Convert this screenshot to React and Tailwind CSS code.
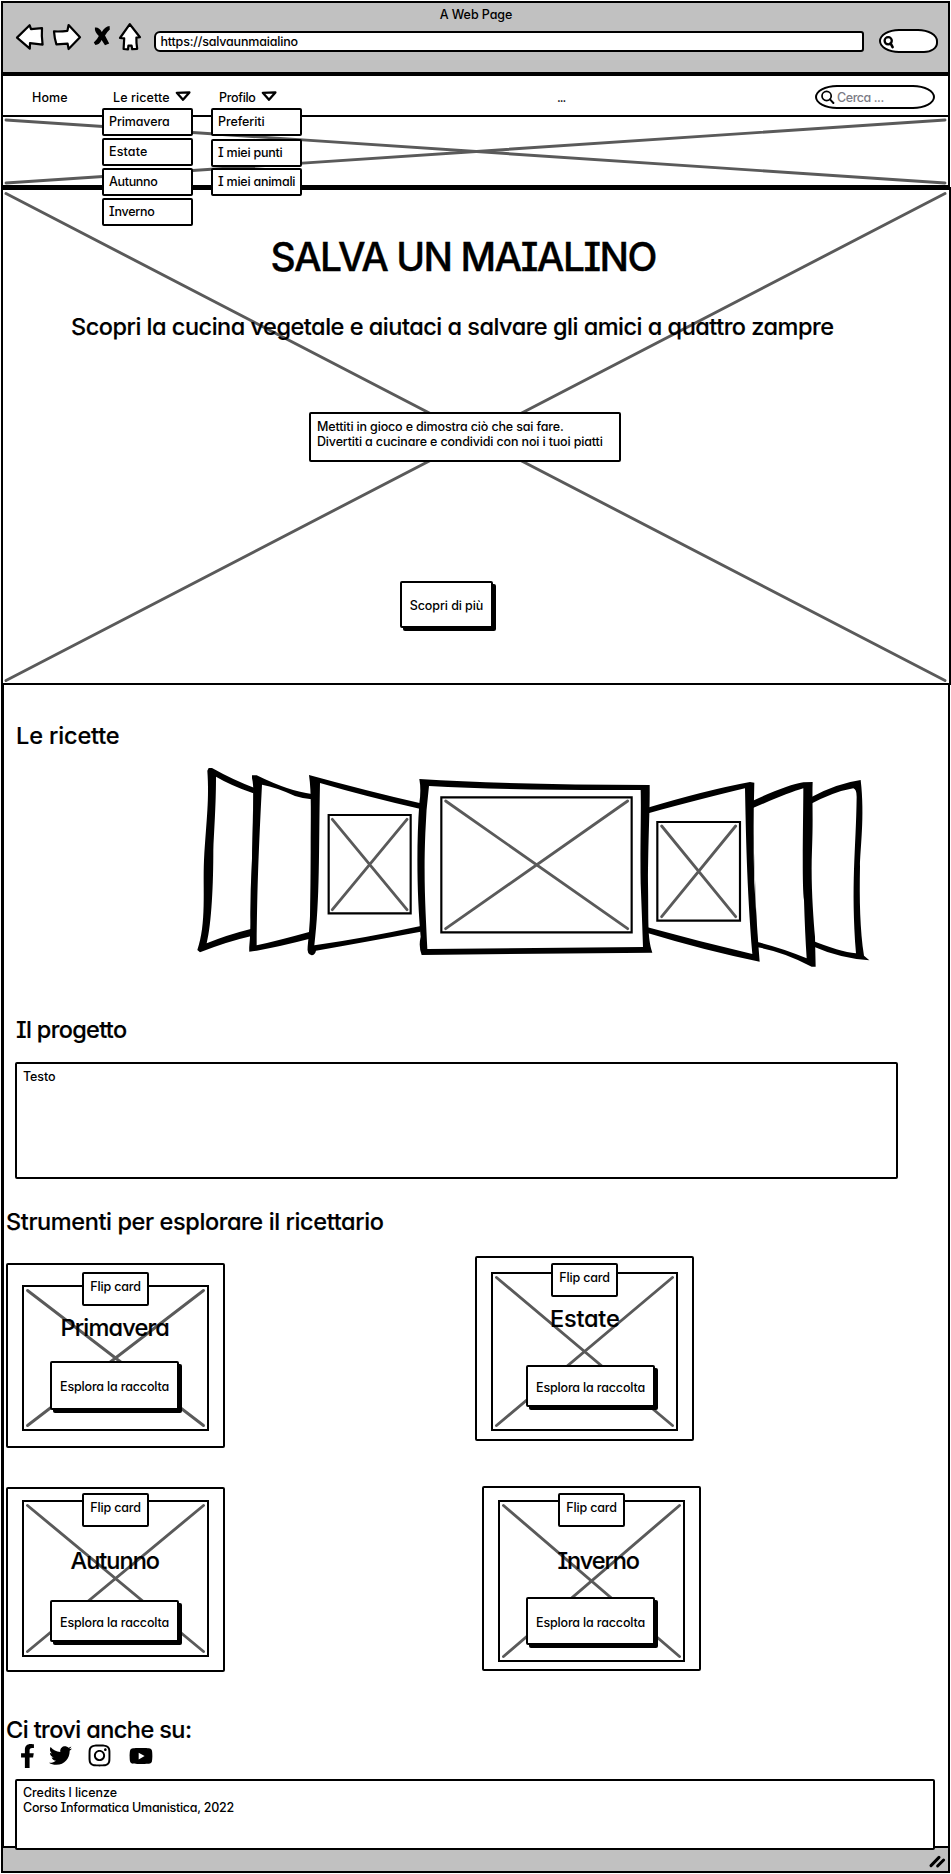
import { FaFacebookF, FaTwitter, FaInstagram, FaYoutube } from 'react-icons/fa'

const small = 'text-[12.5px] leading-[15px] whitespace-nowrap'
const large = 'text-[23.5px] leading-[28px] whitespace-nowrap [-webkit-text-stroke:0.15px_#000]'

function Cross({ w, h, x1, y1, x2, y2 }) {
  return (
    <svg className="absolute top-0 left-0 overflow-visible" width={w} height={h} viewBox={`0 0 ${w} ${h}`}>
      <path d={`M${x1} ${y1}L${x2} ${y2}M${x1} ${y2}L${x2} ${y1}`} stroke="#5a5a5a" strokeWidth="2.9" fill="none" strokeLinecap="round" />
    </svg>
  )
}

function BrowserIcons() {
  return (
    <svg width="130" height="30" viewBox="14 22 130 30" className="ml-[11px] shrink-0">
      <g fill="#fff" stroke="#000" strokeWidth="2.2" strokeLinejoin="round">
        <path d="M17 37.6L29.6 25.2L31 29.2L42 28.2Q41.4 36 42.6 44.6L30 43.2L29.8 48.6Z" />
        <path d="M54 31.4Q61 31.8 67.4 30.8L68.6 25L80 37.2L68.6 49L67.6 43.6L56.4 44.4Q54.4 38 54 31.4Z" />
        <path d="M129.8 24.2L140 37.2L136.4 37.6Q136.2 43 137.2 48.8L132.2 49.2L131.6 45.6L128.4 45.6L128 49.4L123.6 49L124.2 38.4L120 38Z" />
      </g>
      <path d="M94.9 27.6Q99 26.8 101.8 32Q105 26.6 109.6 26L109.8 29.4Q106.8 32 105 35.6L109.2 43.4L105 45.2L101.6 40Q99.4 44.8 95.4 45L93.8 42.4Q97.6 39 98.8 36Q94.4 32 94.9 27.6Z" />
    </svg>
  )
}

function Triangle() {
  return (
    <svg width="16" height="12" viewBox="0 0 16 12">
      <path d="M1.8 2.8L14.4 2.4L8 9.8Z" fill="#fff" stroke="#000" strokeWidth="2.3" strokeLinejoin="round" />
    </svg>
  )
}

function MenuItem({ children, className = '' }) {
  return (
    <div className={`h-7 w-[91px] rounded-[2px] border-2 border-black bg-white pt-1 pl-[5px] ${small} ${className}`}>{children}</div>
  )
}

function Carousel() {
  return (
    <svg width="690" height="210" viewBox="190 760 690 210" className="mt-[10.5px] ml-[186px] shrink-0">
      <g transform="translate(180 750) scale(.33333)">
        <path d="M86 54L96 54Q160 90 222 113L215 558Q140 575 60 607L52 600C80 520 68 420 72 330C80 200 88 150 82 62Z" />
        <path fill="#fff" d="M108 80Q150 105 220 130L212 537Q140 555 80 580C95 520 100 400 100 300C105 200 108 150 108 80Z" />
        <path d="M216 76L230 76Q330 125 395 132L395 565Q300 590 230 602L208 605C206 590 213 560 211 500C210 400 220 300 219 200C220 140 222 110 216 84Z" />
        <path fill="#fff" d="M246 104Q290 112 345 138Q370 146 395 148L390 545Q300 570 230 586C232 400 236 300 246 104Z" />
        <path d="M387 75Q550 120 722 160L722 545Q560 575 408 602Q405 615 395 616Q380 612 383 590C395 480 392 400 392 300C392 200 395 130 387 75Z" />
        <path fill="#fff" d="M420 99Q560 140 722 177L722 528Q550 565 403 586C420 450 416 300 420 99Z" />
        <g transform="translate(1020 0)">
          <path d="M870 143Q950 100 1022 90C1035 200 1020 300 1020 350C1018 450 1020 540 1032 617L1048 631Q960 625 876 588Z" />
          <path fill="#fff" d="M860 168Q940 125 1000 115Q1010 118 1010 140C1008 300 992 400 1008 610Q960 605 870 569Z" />
          <path d="M697 153Q800 105 850 97L878 96C876 150 880 200 876 300C872 400 880 500 885 560L887 650L875 650Q790 605 712 592Z" />
          <path fill="#fff" d="M697 175Q800 130 850 115C850 200 845 400 852 450Q855 550 860 625Q790 595 712 576Z" />
          <path d="M380 174Q560 120 690 96L703 98C700 200 700 300 703 400Q712 550 719 635Q550 600 380 548Z" />
          <path fill="#fff" d="M380 191Q550 145 675 115C678 250 680 400 697 612Q540 575 380 531Z" />
        </g>
        <path d="M718 87Q1000 105 1409 105C1410 180 1405 250 1404 400C1406 520 1402 560 1417 608L725 615Q715 590 722 560C712 450 708 300 718 160Q724 120 718 87Z" />
        <path fill="#fff" d="M747 108Q1000 122 1382 120C1384 180 1380 300 1382 400Q1386 500 1389 591L742 597C738 500 730 400 736 250Q738 180 747 108Z" />
        <g fill="#fff" stroke="#000" strokeWidth="6.5">
          <path d="M446 195H692V490H446Z" />
          <path d="M784 142H1355V547H784Z" />
          <path d="M1432 216H1680V512H1432Z" />
        </g>
        <path
          d="M457 208L681 479M457 479L681 208M797 153L1343 536M797 536L1343 153M1445 228L1667 500M1445 500L1667 228"
          stroke="#5a5a5a"
          strokeWidth="8.5"
          strokeLinecap="round"
        />
      </g>
    </svg>
  )
}

function SeasonCard({ title, className, pad, picH, flip, titlePos, button, label }) {
  return (
    <article className={`relative w-[219px] rounded-[2px] border-2 border-black bg-white ${className}`}>
      <div className={pad}>
        <div className={`relative w-[187px] border-2 border-black ${picH.box}`}>
          <Cross w={183} h={picH.h} x1={3.5} y1={3.5} x2={179.5} y2={picH.h - 3.5} />
        </div>
      </div>
      <h3 className={`absolute ${large} ${titlePos}`}>{title}</h3>
      <div className={`absolute h-[34px] w-[67px] rounded-[2px] border-2 border-black bg-white pt-[5px] text-center tracking-[-0.0133em] ${small} ${flip}`}>Flip card</div>
      <button className={`absolute flex w-[129px] items-center justify-center rounded-[2px] border-2 border-black bg-white tracking-[-0.0129em] shadow-[3px_3px_0_#000] ${small} ${button}`}>
        <span className={label}>Esplora la raccolta</span>
      </button>
    </article>
  )
}

export default function App() {
  return (
    <div className="flex h-[1874px] w-[951px] flex-col overflow-hidden bg-white font-['Inter',sans-serif] font-medium text-black [font-feature-settings:'cv11','cv08']">
      <header className="mt-px ml-px h-[73px] w-[949px] shrink-0 border-2 border-black bg-[#c1c1c1] pt-1">
        <p className={`pl-px text-center tracking-[-0.0061em] ${small}`}>A Web Page</p>
        <div className="flex items-start">
          <BrowserIcons />
          <div className={`mt-[9px] ml-[10px] h-[21px] w-[710px] rounded-l-[6px] rounded-r-[3px] border-2 border-black bg-white pt-[1px] pl-[4.5px] tracking-[-0.015em] ${small}`}>https://salvaunmaialino</div>
          <div className="mt-[7px] ml-[15px] h-6 w-[59px] rounded-[20px_20px_14px_20px/12px_12px_10px_12px] border-2 border-black bg-white">
            <svg width="14" height="14" viewBox="0 0 14 14" className="mt-[3.5px] ml-[1px]">
              <path d="M8.6 8.4L10.6 12.2" stroke="#000" strokeWidth="2.6" strokeLinecap="round" />
              <circle cx="6.2" cy="5.8" r="3.6" fill="none" stroke="#000" strokeWidth="2.3" />
            </svg>
          </div>
        </div>
      </header>

      <nav className={`relative z-20 ml-px flex h-[43px] w-[949px] shrink-0 items-start border-2 border-black bg-white pt-[14px] pl-[29px] ${small}`}>
        <a className="w-[81px] tracking-[0.01em]">Home</a>
        <div className="relative flex w-[106px] tracking-[0.006em]">
          Le ricette
          <span className="ml-[5.5px]"><Triangle /></span>
          <div className="absolute top-[18px] -left-[11px] flex flex-col gap-[2px]">
            <MenuItem className="tracking-[-0.0099em]">Primavera</MenuItem>
            <MenuItem className="tracking-[0.0119em]">Estate</MenuItem>
            <MenuItem className="tracking-[-0.0257em]">Autunno</MenuItem>
            <MenuItem className="tracking-[-0.0211em]">Inverno</MenuItem>
          </div>
        </div>
        <div className="relative flex w-[338px] tracking-[-0.0262em]">
          Profilo
          <span className="ml-[5px]"><Triangle /></span>
          <div className="absolute top-[18px] -left-[8px] flex flex-col gap-[2px]">
            <MenuItem className="tracking-[-0.006em]">Preferiti</MenuItem>
            <MenuItem className="mt-px -mb-px tracking-[-0.018em]">I miei punti</MenuItem>
            <MenuItem className="tracking-[-0.019em]">I miei animali</MenuItem>
          </div>
        </div>
        <span className="w-[258px] tracking-[-0.08em]">...</span>
        <div className="-mt-[5px] flex h-6 w-[120px] items-start rounded-[22px/12px] border-2 border-black pt-[2.5px] pl-[4px] text-[#7c7c86]">
          <svg width="14" height="14" viewBox="0 0 14 14">
            <circle cx="5.6" cy="6" r="4.6" fill="none" stroke="#000" strokeWidth="1.7" />
            <path d="M9 9.4L12.4 13" stroke="#000" strokeWidth="2" strokeLinecap="round" />
          </svg>
          <span className="ml-[2px] tracking-[-0.035em]">Cerca ...</span>
        </div>
      </nav>

      <div className="relative ml-px h-[70px] w-[949px] shrink-0 border-x-2 border-b-2 border-black">
        <Cross w={945} h={68} x1={3} y1={3} x2={942} y2={66} />
      </div>

      <section className="relative ml-px h-[498px] w-[950px] shrink-0 border-2 border-t-[3px] border-black">
        <Cross w={946} h={493} x1={3} y1={3.5} x2={942} y2={490.5} />
        <div className="relative flex flex-col items-start">
          <h1 className="mt-[43px] ml-[267.5px] text-[39px] leading-[48px] tracking-[-0.0389em] whitespace-nowrap [-webkit-text-stroke:0.35px_#000]">SALVA UN MAIALINO</h1>
          <p className={`mt-[31.5px] ml-[68px] tracking-[-0.0208em] ${large}`}>Scopri la cucina vegetale e aiutaci a salvare gli amici a quattro zampre</p>
          <div className={`mt-[71.5px] ml-[306px] h-[50px] w-[312px] rounded-[2px] border-2 border-black bg-white pt-[5px] pl-[6px] ${small}`}>
            <p className="tracking-[-0.0125em]">Mettiti in gioco e dimostra ciò che sai fare.</p>
            <p className="tracking-[-0.0125em]">Divertiti a cucinare e condividi con noi i tuoi piatti</p>
          </div>
          <button className={`mt-[119px] ml-[397px] h-[47px] w-[93px] rounded-[2px] border-2 border-black bg-white pt-px tracking-[-0.0071em] shadow-[3px_3px_0_#000] ${small}`}>Scopri di più</button>
        </div>
      </section>

      <main className="relative z-10 ml-px flex h-[1161px] w-[949px] shrink-0 flex-col items-start border-r-2 border-l-[3px] border-black pt-[36.5px]">
        <h2 className={`ml-[12px] tracking-[-0.006em] ${large}`}>Le ricette</h2>
        <Carousel />

        <h2 className={`mt-[45.5px] ml-[12px] tracking-[-0.0285em] ${large}`}>Il progetto</h2>
        <div className={`mt-[18.5px] ml-[11px] h-[117px] w-[883px] shrink-0 rounded-[2px] border-2 border-black pt-[5px] pl-[6px] tracking-[-0.0072em] ${small}`}>Testo</div>

        <h2 className={`mt-[29px] ml-[2px] tracking-[-0.0167em] ${large}`}>Strumenti per esplorare il ricettario</h2>
        <div className="mt-[20px] ml-[2px] flex w-[695px] shrink-0 flex-col gap-[38px]">
          <div className="flex h-[192px] items-start justify-between pr-[7px]">
            <SeasonCard
              title="Primavera"
              className="mt-[7px] h-[185px]"
              pad="pt-[20px] pl-[14px]"
              picH={{ box: 'h-[146px]', h: 142 }}
              titlePos="top-[48.5px] left-[52.5px] tracking-[-0.0346em]"
              flip="top-[7px] left-[74px]"
              button="top-[96px] left-[42px] h-[49px]"
              label="pt-[2px]"
            />
            <SeasonCard
              title="Estate"
              className="h-[185px]"
              pad="pt-[14px] pl-[14px]"
              picH={{ box: 'h-[159px]', h: 155 }}
              titlePos="top-[46.5px] left-[73px] tracking-[-0.0085em]"
              flip="top-[5px] left-[74px]"
              button="top-[107px] left-[49px] h-[42px]"
              label="pt-[2px]"
            />
          </div>
          <div className="flex h-[185px] items-start justify-between">
            <SeasonCard
              title="Autunno"
              className="mt-[1px] h-[185px]"
              pad="pt-[11px] pl-[14px]"
              picH={{ box: 'h-[157px]', h: 153 }}
              titlePos="top-[58px] left-[62.5px] tracking-[-0.042em]"
              flip="top-[4px] left-[74px]"
              button="top-[111px] left-[42px] h-[42px]"
              label="pt-[2px]"
            />
            <SeasonCard
              title="Inverno"
              className="h-[185px]"
              pad="pt-[12px] pl-[14px]"
              picH={{ box: 'h-[162px]', h: 158 }}
              titlePos="top-[59px] left-[73.5px] tracking-[-0.0456em]"
              flip="top-[5px] left-[74px]"
              button="top-[109px] left-[42px] h-[48px]"
              label="pt-[3px]"
            />
          </div>
        </div>

        <h2 className={`mt-[44.5px] ml-[2px] tracking-[-0.0245em] ${large}`}>Ci trovi anche su:</h2>
        <div className="flex h-6 shrink-0 items-center">
          <FaFacebookF className="ml-[15.5px] h-6 w-[15px]" />
          <FaTwitter className="ml-[14.5px] h-[23px] w-[23px]" />
          <FaInstagram className="ml-[15.5px] h-[25px] w-[23px]" />
          <FaYoutube className="ml-[18.5px] h-6 w-[24px]" />
        </div>
        <footer className={`mt-[11.5px] ml-[11px] h-[71px] w-[920px] shrink-0 rounded-[2px] border-2 border-black bg-white pt-[4px] pl-[6px] ${small}`}>
          <p className="tracking-[-0.006em]">Credits l licenze</p>
          <p className="tracking-[-0.021em]">Corso Informatica Umanistica, 2022</p>
        </footer>
      </main>

      <div className="ml-px flex h-[27px] w-[949px] shrink-0 justify-end border-2 border-black bg-[#c1c1c1] pt-[6px] pr-[2px]">
        <svg width="18" height="15" viewBox="0 0 18 15">
          <path d="M3 11.6L11 3.4M9.6 12L15.6 6" stroke="#000" strokeWidth="3" strokeLinecap="round" />
        </svg>
      </div>
    </div>
  )
}
